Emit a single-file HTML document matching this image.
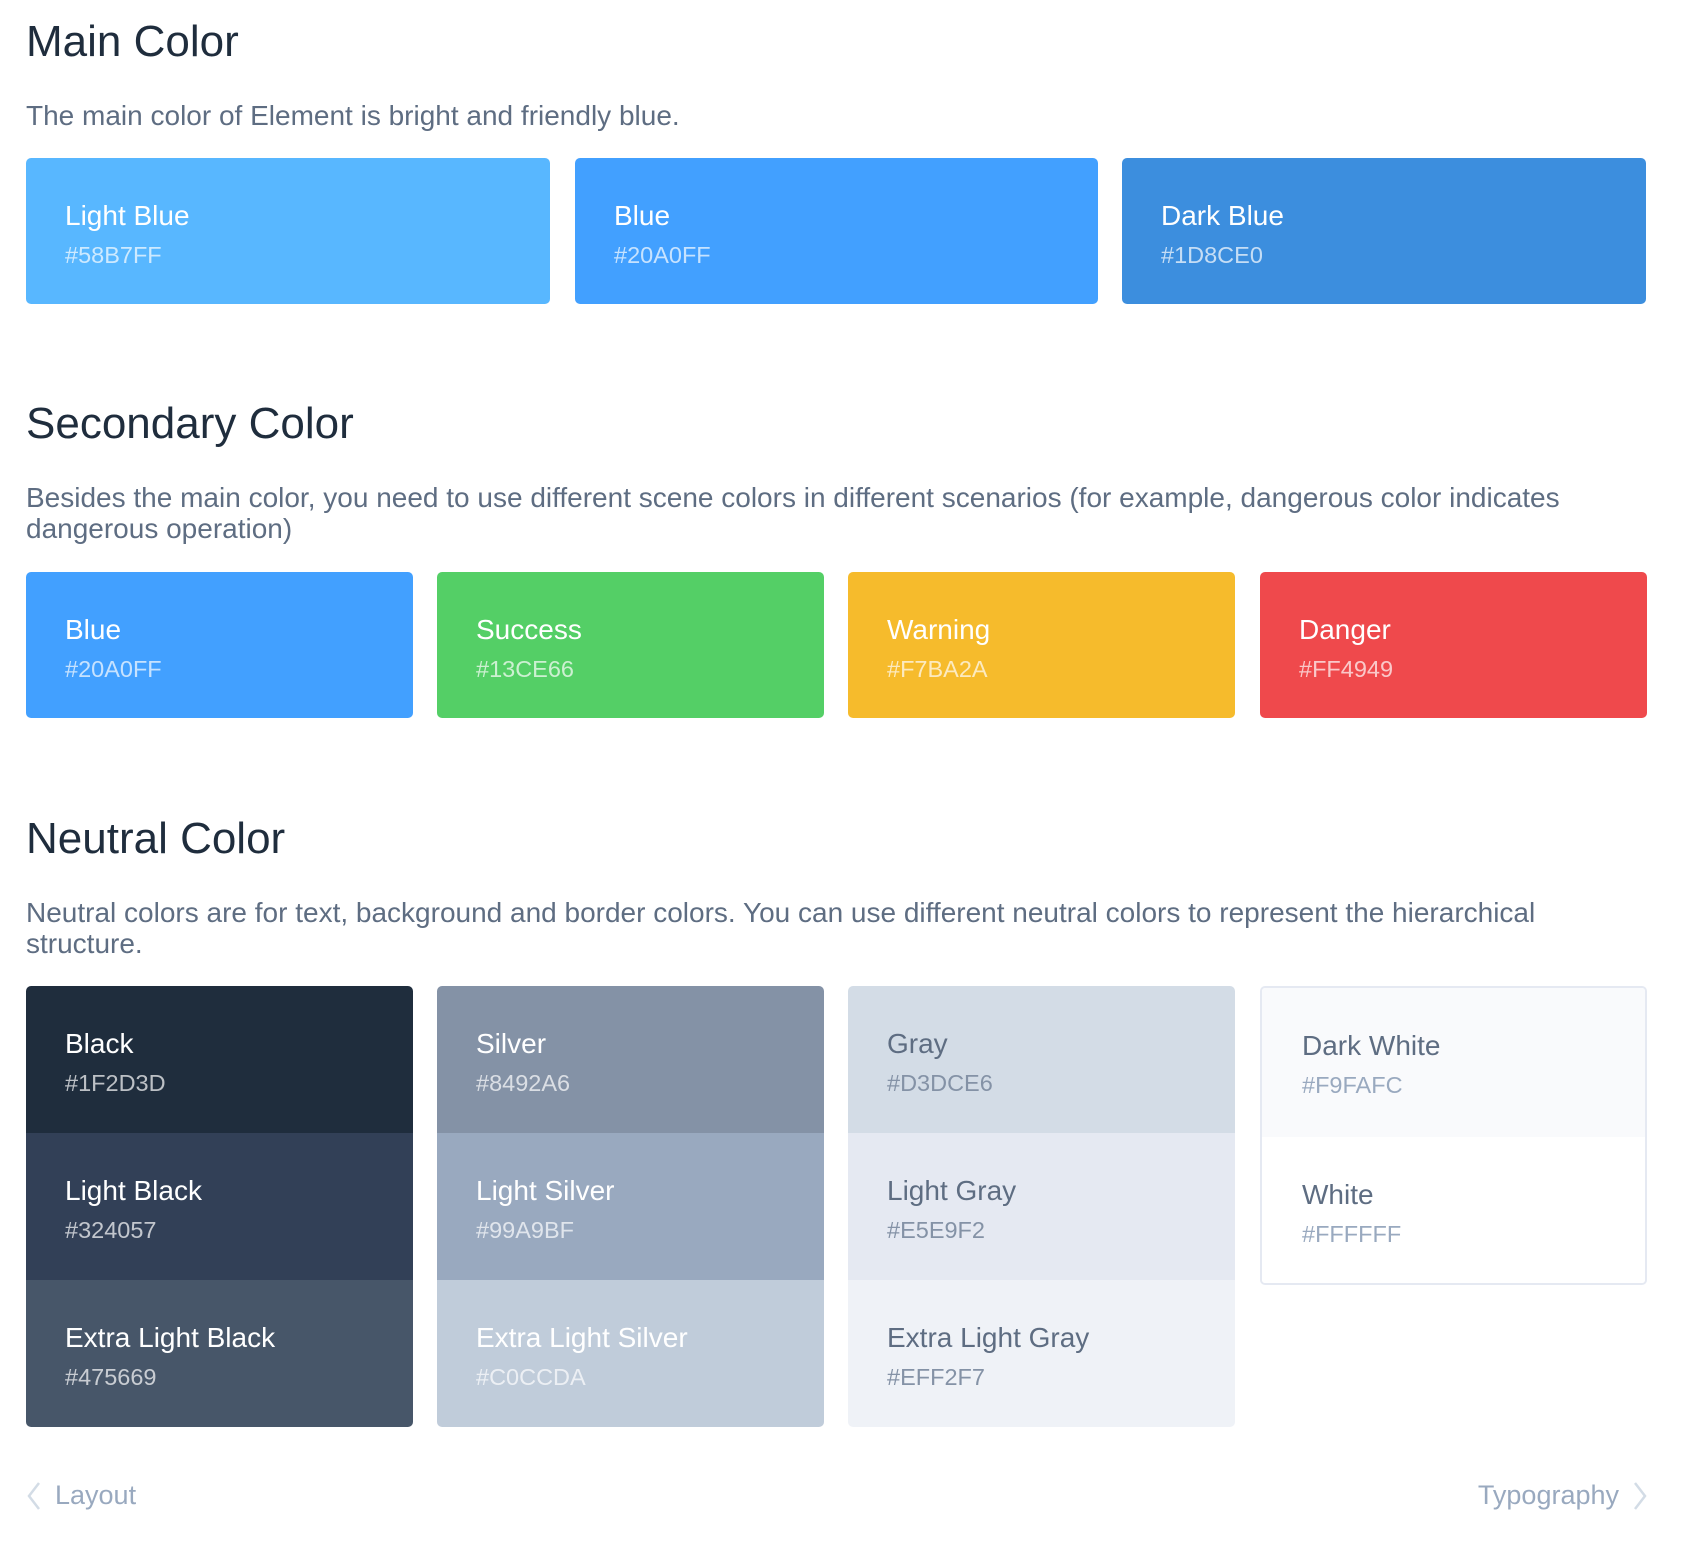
<!DOCTYPE html>
<html><head><meta charset="utf-8"><style>
*{margin:0;padding:0;box-sizing:border-box}
body{width:1690px;height:1544px;background:#fff;font-family:"Liberation Sans",Helvetica,Arial,sans-serif;position:relative;overflow:hidden}
.a{position:absolute;white-space:nowrap;line-height:1}
h2{position:absolute;left:26px;font-weight:400;font-size:44px;line-height:1;color:#1f2d3d}
p.d{position:absolute;left:26px;font-size:28px;line-height:31px;color:#5e6d82;width:1625px}
.b{position:absolute;border-radius:5px;overflow:hidden}
.r{position:relative;height:147px}
.n{position:absolute;left:39px;top:44px;font-size:28px;line-height:1;white-space:nowrap}
.h{position:absolute;left:39px;top:86px;font-size:23.5px;line-height:1;opacity:.7;white-space:nowrap}
.w .n,.w .h{color:#fff}
</style></head><body>
<h2 style="top:20px">Main Color</h2>
<p class="d" style="top:100px">The main color of Element is bright and friendly blue.</p>

<div class="b w" style="left:26px;top:158px;width:524px;height:146px;background:#58b7ff"><div class="n">Light Blue</div><div class="h">#58B7FF</div></div>
<div class="b w" style="left:575px;top:158px;width:523px;height:146px;background:#42a0ff"><div class="n">Blue</div><div class="h">#20A0FF</div></div>
<div class="b w" style="left:1122px;top:158px;width:524px;height:146px;background:#3c8ede"><div class="n">Dark Blue</div><div class="h">#1D8CE0</div></div>

<h2 style="top:402px">Secondary Color</h2>
<p class="d" style="top:482px">Besides the main color, you need to use different scene colors in different scenarios (for example, dangerous color indicates dangerous operation)</p>

<div class="b w" style="left:26px;top:572px;width:387px;height:146px;background:#42a0ff"><div class="n">Blue</div><div class="h">#20A0FF</div></div>
<div class="b w" style="left:437px;top:572px;width:387px;height:146px;background:#54cf66"><div class="n">Success</div><div class="h">#13CE66</div></div>
<div class="b w" style="left:848px;top:572px;width:387px;height:146px;background:#f6bb2c"><div class="n">Warning</div><div class="h">#F7BA2A</div></div>
<div class="b w" style="left:1260px;top:572px;width:387px;height:146px;background:#ef494c"><div class="n">Danger</div><div class="h">#FF4949</div></div>

<h2 style="top:817px">Neutral Color</h2>
<p class="d" style="top:897px">Neutral colors are for text, background and border colors. You can use different neutral colors to represent the hierarchical structure.</p>

<div class="b w" style="left:26px;top:986px;width:387px">
<div class="r" style="background:#1f2d3d"><div class="n">Black</div><div class="h">#1F2D3D</div></div>
<div class="r" style="background:#324057"><div class="n">Light Black</div><div class="h">#324057</div></div>
<div class="r" style="background:#475669"><div class="n">Extra Light Black</div><div class="h">#475669</div></div>
</div>
<div class="b w" style="left:437px;top:986px;width:387px">
<div class="r" style="background:#8492a6"><div class="n">Silver</div><div class="h">#8492A6</div></div>
<div class="r" style="background:#99a9bf"><div class="n">Light Silver</div><div class="h">#99A9BF</div></div>
<div class="r" style="background:#c0ccda"><div class="n">Extra Light Silver</div><div class="h">#C0CCDA</div></div>
</div>
<div class="b" style="left:848px;top:986px;width:387px">
<div class="r" style="background:#d3dce6"><div class="n" style="color:#5e6d82">Gray</div><div class="h" style="color:#8492a6;opacity:1">#D3DCE6</div></div>
<div class="r" style="background:#e5e9f2"><div class="n" style="color:#5e6d82">Light Gray</div><div class="h" style="color:#8492a6;opacity:1">#E5E9F2</div></div>
<div class="r" style="background:#eff2f7"><div class="n" style="color:#5e6d82">Extra Light Gray</div><div class="h" style="color:#8492a6;opacity:1">#EFF2F7</div></div>
</div>
<div class="b" style="left:1260px;top:986px;width:387px;height:299px;border:2px solid #e5e9f2">
<div class="r" style="background:#f9fafc;height:149px"><div class="n" style="color:#5e6d82;left:40px">Dark White</div><div class="h" style="color:#99a9bf;opacity:1;left:40px">#F9FAFC</div></div>
<div class="r" style="background:#fff;height:148px"><div class="n" style="color:#5e6d82;left:40px">White</div><div class="h" style="color:#99a9bf;opacity:1;left:40px">#FFFFFF</div></div>
</div>

<svg class="a" style="left:26px;top:1481px" width="16" height="30" viewBox="0 0 16 30"><path d="M13 2 L3 15 L13 28" fill="none" stroke="#d3dce6" stroke-width="2.5"/></svg>
<div class="a" style="left:55px;top:1482px;font-size:27px;color:#99a9bf">Layout</div>
<div class="a" style="right:71px;top:1482px;font-size:27px;color:#99a9bf">Typography</div>
<svg class="a" style="left:1632px;top:1481px" width="16" height="30" viewBox="0 0 16 30"><path d="M3 2 L13 15 L3 28" fill="none" stroke="#d3dce6" stroke-width="2.5"/></svg>
</body></html>
